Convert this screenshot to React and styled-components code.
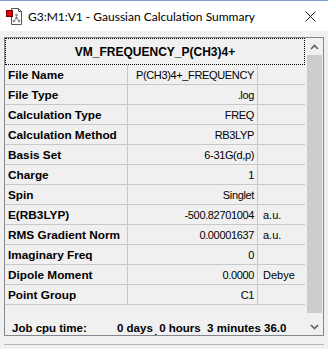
import styled, { createGlobalStyle } from "styled-components";

const GlobalStyle = createGlobalStyle`
  html, body {
    margin: 0;
    padding: 0;
    background: #f0f0f0;
  }
  body {
    font-family: "Liberation Sans", Arial, sans-serif;
  }
`;

const rows = [
    { label: "File Name", value: "P(CH3)4+_FREQUENCY", unit: "" },
    { label: "File Type", value: ".log", unit: "" },
    { label: "Calculation Type", value: "FREQ", unit: "" },
    { label: "Calculation Method", value: "RB3LYP", unit: "" },
    { label: "Basis Set", value: "6-31G(d,p)", unit: "" },
    { label: "Charge", value: "1", unit: "" },
    { label: "Spin", value: "Singlet", unit: "" },
    { label: "E(RB3LYP)", value: "-500.82701004", unit: "a.u." },
    { label: "RMS Gradient Norm", value: "0.00001637", unit: "a.u." },
    { label: "Imaginary Freq", value: "0", unit: "" },
    { label: "Dipole Moment", value: "0.0000", unit: "Debye" },
    { label: "Point Group", value: "C1", unit: "" },
];

const AppIcon = () => (
    <svg width="18" height="18" viewBox="0 0 18 18">
        <path d="M6.5 1.5 H13.5 L16.5 4.5 V17.5 H6.5 Z" fill="#fff" stroke="#555" />
        <path d="M13.5 1.5 V4.5 H16.5" fill="none" stroke="#555" />
        <line x1="11.5" y1="8" x2="11.5" y2="11" stroke="#999" strokeWidth="1" />
        <line x1="11.5" y1="11" x2="9" y2="14" stroke="#999" strokeWidth="1" />
        <line x1="11.5" y1="11" x2="14" y2="14" stroke="#999" strokeWidth="1" />
        <circle cx="11.5" cy="8" r="1.3" fill="#888" />
        <circle cx="11.5" cy="11" r="1.3" fill="#888" />
        <circle cx="9" cy="14" r="1.3" fill="#888" />
        <circle cx="14" cy="14" r="1.3" fill="#888" />
        <rect x="1.5" y="3.5" width="6" height="6" fill="#e00000" stroke="#700" />
    </svg>
);

const CloseIcon = () => (
    <svg width="11" height="11" viewBox="0 0 11 11">
        <path d="M0.5 0.5 L10.5 10.5 M10.5 0.5 L0.5 10.5" stroke="#111" strokeWidth="1" />
    </svg>
);

const Chevron = ({ down }) => (
    <svg width="9" height="6" viewBox="0 0 9 6">
        <path d={down ? "M1 1 L4.5 4.5 L8 1" : "M1 5 L4.5 1.5 L8 5"} fill="none" stroke="#606060" strokeWidth="1.6" />
    </svg>
);

const App = () => {
    return (
        <>
            <GlobalStyle />
            <Window>
                <TitleBar>
                    <AppIcon />
                    <Title>G3:M1:V1 - Gaussian Calculation Summary</Title>
                    <CloseBtn><CloseIcon /></CloseBtn>
                </TitleBar>
                <Body>
                    <Panel>
                        <Table>
                            <Header>VM_FREQUENCY_P(CH3)4+</Header>
                            {rows.map((r) => (
                                <Row key={r.label}>
                                    <Label>{r.label}</Label>
                                    <Value>{r.value}</Value>
                                    <Unit>{r.unit}</Unit>
                                </Row>
                            ))}
                            <CpuRow>
                                <CpuLabel>Job cpu time:</CpuLabel>
                                <CpuValue>0 days&nbsp;&nbsp;0 hours&nbsp;&nbsp;3 minutes 36.0 seconds</CpuValue>
                            </CpuRow>
                        </Table>
                        <ScrollBar>
                            <Arrow><Chevron /></Arrow>
                            <Track><Thumb /></Track>
                            <Arrow><Chevron down /></Arrow>
                        </ScrollBar>
                    </Panel>
                    <BottomLine />
                </Body>
            </Window>
        </>
    );
};

const Window = styled.div`
width: 328px;
height: 349px;
overflow: hidden;
border-top: 1px solid #7d9fc9;
box-sizing: border-box;
display: flex;
flex-direction: column;
background: #f0f0f0;
`;

const TitleBar = styled.div`
height: 30px;
background: #fff;
display: flex;
align-items: center;
padding-left: 5px;
flex-shrink: 0;
`;

const Title = styled.div`
font-family: Lato, "Open Sans", sans-serif;
font-size: 12px;
color: #000;
margin-left: 5px;
flex: 1;
`;

const CloseBtn = styled.div`
width: 20px;
margin-right: 8px;
display: flex;
justify-content: center;
`;

const Body = styled.div`
padding: 6px 4px 0 4px;
display: flex;
flex-direction: column;
`;

const Panel = styled.div`
height: 299px;
border: 1px solid #828790;
display: flex;
overflow: hidden;
box-sizing: border-box;
`;

const Table = styled.div`
width: 300px;
display: flex;
flex-direction: column;
`;

const Header = styled.div`
height: 27px;
flex-shrink: 0;
box-sizing: border-box;
border: 1px dotted #000;
display: flex;
align-items: center;
justify-content: center;
font-weight: bold;
font-size: 12px;
color: #000;
`;

const Row = styled.div`
height: 20px;
flex-shrink: 0;
box-sizing: border-box;
display: grid;
grid-template-columns: 123px 130px 47px;
border-bottom: 1px solid #c8c8c8;
font-size: 11px;
color: #000;
`;

const Label = styled.div`
display: flex;
align-items: center;
padding-left: 3px;
font-weight: bold;
font-size: 11.8px;
border-right: 1px solid #c8c8c8;
white-space: nowrap;
`;

const Value = styled.div`
display: flex;
align-items: center;
justify-content: flex-end;
padding-right: 3px;
border-right: 1px solid #c8c8c8;
white-space: nowrap;
letter-spacing: -0.35px;
`;

const Unit = styled.div`
display: flex;
align-items: center;
padding-left: 5px;
white-space: nowrap;
`;

const CpuRow = styled.div`
display: grid;
grid-template-columns: 112px 180px;
padding-top: 18px;
font-weight: bold;
font-size: 11.5px;
line-height: 10px;
color: #000;
`;

const CpuLabel = styled.div`
padding-left: 7px;
`;

const CpuValue = styled.div`
white-space: normal;
`;

const ScrollBar = styled.div`
width: 17px;
margin-left: 1px;
display: flex;
flex-direction: column;
background: #f0f0f0;
`;

const Arrow = styled.div`
height: 17px;
display: flex;
align-items: center;
justify-content: center;
flex-shrink: 0;
`;

const Track = styled.div`
flex: 1;
padding: 0 1px;
`;

const Thumb = styled.div`
height: 258px;
background: #cdcdcd;
`;

const BottomLine = styled.div`
margin-top: 8px;
height: 1px;
background: #b8b8b8;
`;

export default App;
